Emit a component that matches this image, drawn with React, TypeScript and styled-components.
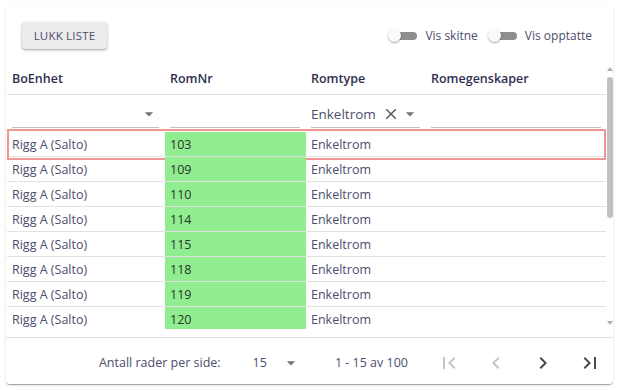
import React from 'react';
import styled, { createGlobalStyle } from 'styled-components';

const Global = createGlobalStyle`
  html, body { margin: 0; padding: 0; background: #fff; }
  body { font-family: 'Open Sans', 'Lato', sans-serif; color: #4d4d6d; }
  * { box-sizing: border-box; }
`;

const Page = styled.div`
  padding: 6px;
`;

const Card = styled.div`
  width: 607px;
  height: 378px;
  border-radius: 4px;
  background: #fff;
  box-shadow: 0px 2px 1px -1px rgba(0,0,0,0.2), 0px 1px 1px 0px rgba(0,0,0,0.14), 0px 1px 3px 0px rgba(0,0,0,0.12);
  display: flex;
  flex-direction: column;
  overflow: hidden;
`;

const Toolbar = styled.div`
  height: 56px;
  flex: none;
  display: flex;
  align-items: flex-start;
  justify-content: space-between;
  padding: 16px 21px 0 16px;
`;

const Button = styled.button`
  height: 27px;
  width: 85px;
  padding: 0;
  border: none;
  border-radius: 4px;
  background: #ececec;
  box-shadow: 0 1px 3px rgba(0,0,0,0.3), 0 1px 1px rgba(0,0,0,0.1);
  font-family: inherit;
  font-size: 11.5px;
  letter-spacing: 0.2px;
  color: #4d4d6d;
  text-transform: uppercase;
`;

const Switches = styled.div`
  display: flex;
  align-items: center;
  height: 27px;
`;

const SwitchBox = styled.span<{ $first?: boolean }>`
  position: relative;
  display: inline-flex;
  align-items: center;
  width: 30px;
  height: 14px;
  margin-left: ${p => (p.$first ? 0 : 10)}px;
`;

const Track = styled.span`
  margin-left: 4px;
  width: 25px;
  height: 8px;
  border-radius: 4px;
  background: #8e8e8e;
`;

const Thumb = styled.span`
  position: absolute;
  left: 0;
  top: 0.5px;
  width: 13px;
  height: 13px;
  border-radius: 50%;
  background: #fafafa;
  box-shadow: 0 1px 2px rgba(0,0,0,0.35);
`;

const SwitchLabel = styled.span`
  margin-left: 7px;
  font-size: 12px;
  color: #4d4d6d;
`;

const Body = styled.div`
  height: 267px;
  flex: none;
  display: flex;
`;

const TableArea = styled.div`
  flex: 1;
  overflow: hidden;
  display: flex;
  flex-direction: column;
`;

const cols = '158px 141px 120px 1fr';

const HeaderRow = styled.div`
  display: grid;
  grid-template-columns: ${cols};
  height: 33px;
  flex: none;
  border-bottom: 1px solid #e0e0e0;
  margin-left: 1px;
`;

const HeadCell = styled.div`
  display: flex;
  align-items: center;
  padding: 0 5px;
  font-size: 12.5px;
  font-weight: 600;
  color: #2f2f52;
`;

const FilterRow = styled.div`
  display: grid;
  grid-template-columns: ${cols};
  height: 34px;
  flex: none;
  align-items: end;
  padding-bottom: 1px;
`;

const FilterInput = styled.div`
  height: 27px;
  margin: 0 5px 0 6px;
  border-bottom: 1px solid #c2c2c2;
  display: flex;
  align-items: center;
  justify-content: flex-end;
`;

const FilterValue = styled.span`
  flex: 1;
  font-size: 13.5px;
  color: #4d4d6d;
`;

const Rows = styled.div`
  padding-top: 3px;
  flex: 1;
  overflow: hidden;
`;

const Row = styled.div<{ $selected?: boolean }>`
  position: relative;
  display: grid;
  grid-template-columns: ${cols};
  height: 25px;
  border-bottom: 1px solid #e2e2e2;
  margin-left: 1px;
  &::after {
    content: '';
    display: ${p => (p.$selected ? 'block' : 'none')};
    position: absolute;
    left: 0;
    right: 0;
    top: -3px;
    bottom: -4px;
    border: 2px solid #f09494;
    pointer-events: none;
  }
`;

const Cell = styled.div<{ $green?: boolean }>`
  display: flex;
  align-items: center;
  padding: 0 5px;
  font-size: 12.5px;
  background: ${p => (p.$green ? '#90ee90' : 'transparent')};
  color: ${p => (p.$green ? '#2a332a' : '#4d4d6d')};
`;

const Rail = styled.div`
  width: 7px;
  flex: none;
  display: flex;
  flex-direction: column;
  align-items: center;
  padding: 5px 0 4px;
`;

const ArrowUp = styled.span`
  width: 0;
  height: 0;
  border-left: 3px solid transparent;
  border-right: 3px solid transparent;
  border-bottom: 4px solid #b0b0b0;
`;

const ArrowDown = styled.span`
  width: 0;
  height: 0;
  margin-top: auto;
  border-left: 3px solid transparent;
  border-right: 3px solid transparent;
  border-top: 4px solid #b0b0b0;
`;

const RailThumb = styled.span`
  margin-top: 6px;
  width: 6px;
  height: 141px;
  border-radius: 3px;
  background: #c1c1c1;
`;

const Footer = styled.div`
  margin-top: 8px;
  height: 47px;
  flex: none;
  border-top: 1px solid #e0e0e0;
  display: flex;
  justify-content: flex-end;
  align-items: center;
  padding-top: 3px;
  font-size: 12.5px;
  color: #4d4d6d;
`;

const SelectBox = styled.div`
  margin-left: 32px;
  display: flex;
  align-items: center;
  gap: 14px;
`;

const PageInfo = styled.span`
  margin-left: 34px;
  margin-right: 17px;
`;

const IconBtn = styled.span<{ $disabled?: boolean }>`
  width: 47px;
  display: flex;
  justify-content: center;
  color: ${p => (p.$disabled ? '#c4c4c4' : '#4a4a4a')};
`;

const Icon = ({ d, size = 20, color = '#757575' }: { d: string; size?: number; color?: string }) => (
  <svg width={size} height={size} viewBox="0 0 24 24" fill={color}>
    <path d={d} />
  </svg>
);

const DROP = 'M7 10l5 5 5-5z';
const CLEAR = 'M19 6.41L17.59 5 12 10.59 6.41 5 5 6.41 10.59 12 5 17.59 6.41 19 12 13.41 17.59 19 19 17.59 13.41 12z';
const FIRST = 'M18.41 16.59L13.82 12l4.59-4.59L17 6l-6 6 6 6zM6 6h2v12H6z';
const PREV = 'M15.41 7.41L14 6l-6 6 6 6 1.41-1.41L10.83 12z';
const NEXT = 'M10 6L8.59 7.41 13.17 12l-4.58 4.59L10 18l6-6z';
const LAST = 'M5.59 7.41L10.18 12l-4.59 4.59L7 18l6-6-6-6zM16 6h2v12h-2z';

const rooms = ['103', '109', '110', '114', '115', '118', '119', '120'];

export default function App() {
  return (
    <Page>
      <Global />
      <Card>
        <Toolbar>
          <Button>Lukk liste</Button>
          <Switches>
            <SwitchBox $first>
              <Track />
              <Thumb />
            </SwitchBox>
            <SwitchLabel>Vis skitne</SwitchLabel>
            <SwitchBox>
              <Track />
              <Thumb />
            </SwitchBox>
            <SwitchLabel>Vis opptatte</SwitchLabel>
          </Switches>
        </Toolbar>
        <Body>
          <TableArea>
            <HeaderRow>
              <HeadCell>BoEnhet</HeadCell>
              <HeadCell>RomNr</HeadCell>
              <HeadCell>Romtype</HeadCell>
              <HeadCell>Romegenskaper</HeadCell>
            </HeaderRow>
            <FilterRow>
              <FilterInput>
                <Icon d={DROP} />
              </FilterInput>
              <FilterInput />
              <FilterInput>
                <FilterValue>Enkeltrom</FilterValue>
                <Icon d={CLEAR} size={18} color="#5a5a5a" />
                <Icon d={DROP} />
              </FilterInput>
              <FilterInput />
            </FilterRow>
            <Rows>
              {rooms.map((r, i) => (
                <Row key={r} $selected={i === 0}>
                  <Cell>Rigg A (Salto)</Cell>
                  <Cell $green>{r}</Cell>
                  <Cell>Enkeltrom</Cell>
                  <Cell />
                </Row>
              ))}
            </Rows>
          </TableArea>
          <Rail>
            <ArrowUp />
            <RailThumb />
            <ArrowDown />
          </Rail>
        </Body>
        <Footer>
          <span>Antall rader per side:</span>
          <SelectBox>
            <span>15</span>
            <Icon d={DROP} />
          </SelectBox>
          <PageInfo>1 - 15 av 100</PageInfo>
          <IconBtn $disabled><Icon d={FIRST} size={24} color="currentColor" /></IconBtn>
          <IconBtn $disabled><Icon d={PREV} size={24} color="currentColor" /></IconBtn>
          <IconBtn><Icon d={NEXT} size={24} color="currentColor" /></IconBtn>
          <IconBtn><Icon d={LAST} size={24} color="currentColor" /></IconBtn>
        </Footer>
      </Card>
    </Page>
  );
}
